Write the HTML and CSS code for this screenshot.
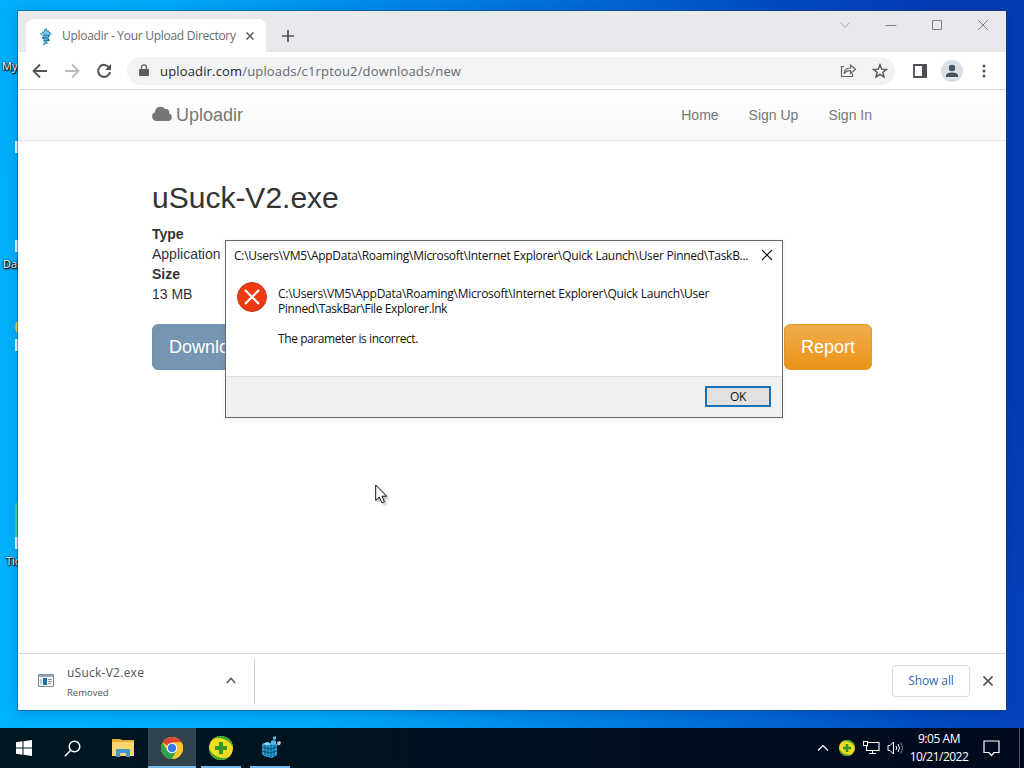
FILE: index.html
```html
<!DOCTYPE html>
<html lang="en">
<head>
  <meta charset="UTF-8">
  <title>Uploadir - Your Upload Directory</title>
  <link rel="stylesheet" href="styles.css">
</head>
<body>
  <div class="desktop">
    <!-- desktop shortcuts -->
    <span class="label label-my">My</span>
    <span class="label label-data">Data</span>
    <span class="label label-tic">Tic</span>
    <i class="shortcut s1"></i>
    <i class="shortcut s2"></i>
    <i class="shortcut yellow"></i>
    <i class="shortcut s3"></i>
    <i class="shortcut green"></i>
    <i class="shortcut s4"></i>

    <!-- browser -->
    <div class="window">
      <div class="tabs">
        <div class="tab">
          <svg class="favicon" width="14" height="18" viewBox="0 0 14 18">
            <path fill="#7cc4e4" d="M7 1l5.500 5.500H10v5L7 16l-3-1 1-2-1-2V6.500H1.500z"/>
            <path stroke="#1c6f9f" stroke-width="1.400" stroke-dasharray="1.500 1" fill="none" d="M1.500 6.500L7 1l5.500 5.500"/>
            <path stroke="#2383b5" stroke-width="1.500" fill="none" d="M3.500 7.500h7M4 10h6M4.500 12.500h6M6 15h2.500"/>
            <path stroke="#14618f" stroke-width="1.500" fill="none" d="M10 7v1.500M9.500 11v2M4 9v2M5 15.500v1.500"/>
          </svg>
          <span class="tab-title">Uploadir - Your Upload Directory</span>
          <svg class="tab-close" width="8" height="8" viewBox="0 0 8 8"><path d="M.5.5l7 7M7.500.5l-7 7" stroke="#55585c" stroke-width="1.500"/></svg>
        </div>
        <svg class="new-tab" width="12" height="12" viewBox="0 0 12 12"><path d="M6 0v12M0 6h12" stroke="#4c4f53" stroke-width="1.700"/></svg>
        <div class="controls">
          <svg width="12" height="12" viewBox="0 0 12 12"><path d="M1.500 3.500L6 8.500l4.500-5" fill="none" stroke="#a5a7aa"/></svg>
          <svg width="12" height="12" viewBox="0 0 12 12"><path d="M.5 6.500h11" stroke="#86888b"/></svg>
          <svg width="12" height="12" viewBox="0 0 12 12"><path d="M1.500 1.500h9v9h-9z" fill="none" stroke="#808285"/></svg>
          <svg width="12" height="12" viewBox="0 0 12 12"><path d="M1 1l10 10M11 1L1 11" stroke="#808285"/></svg>
        </div>
      </div>

      <div class="toolbar">
        <svg class="back" width="16" height="16" viewBox="0 0 16 16"><path d="M15 8H2M8 1.500L1.500 8 8 14.500" fill="none" stroke="#505357" stroke-width="1.800"/></svg>
        <svg class="forward" width="16" height="16" viewBox="0 0 16 16"><path d="M1 8h13M8 1.500L14.500 8 8 14.500" fill="none" stroke="#babcbe" stroke-width="1.800"/></svg>
        <svg class="reload" width="16" height="16" viewBox="0 0 16 16"><path d="M13.200 4.700A6 6 0 1 0 14 9" fill="none" stroke="#505357" stroke-width="2"/><path d="M15 1v6H9z" fill="#505357"/></svg>
        <div class="address">
          <svg width="10" height="13" viewBox="0 0 10 13"><path d="M1 5h8q1 0 1 1v5q0 1-1 1H1q-1 0-1-1V6q0-1 1-1z" fill="#5a5d61"/><path d="M2.500 5.500V3.300a2.500 2.500 0 0 1 5 0v2.200" fill="none" stroke="#5a5d61" stroke-width="1.300"/></svg>
          <span class="url"><b>uploadir.com</b>/uploads/c1rptou2/downloads/new</span>
          <svg class="share" width="17" height="15" viewBox="0 0 17 15"><path d="M4 3.500H1.500v10h11V10.500M4 10.500c.7-3.800 2.800-5.500 6.500-5.500V2l5 4.200-5 4.300v-3C7.500 7.500 5.700 8.400 4 10.500z" fill="none" stroke="#606367" stroke-width="1.200"/></svg>
          <svg class="star" width="16" height="16" viewBox="0 0 16 16"><path d="M8 1.800l1.700 4.300 4.700.3-3.600 3 1.200 4.500L8 11.400 4 13.900l1.200-4.500-3.600-3 4.700-.3z" fill="none" stroke="#505357" stroke-width="1.400"/></svg>
        </div>
        <svg class="panel" width="14" height="14" viewBox="0 0 14 14"><path d="M1 1h12v12H1z" fill="none" stroke="#4c4f53" stroke-width="1.800"/><path d="M9 0h5v14H9z" fill="#4c4f53"/></svg>
        <svg class="avatar" width="22" height="22" viewBox="0 0 22 22"><circle cx="11" cy="11" r="11" fill="#dbe0e6"/><circle cx="11" cy="8" r="3.200" fill="#485360"/><path d="M5 17v-1.500c0-4 12-4 12 0V17z" fill="#485360"/></svg>
        <svg class="dots" width="4" height="14" viewBox="0 0 4 14"><g fill="#505357"><circle cx="2" cy="2" r="1.500"/><circle cx="2" cy="7" r="1.500"/><circle cx="2" cy="12" r="1.500"/></g></svg>
      </div>

      <header class="navbar">
        <a class="brand">
          <svg width="20" height="15" viewBox="0 0 20 15"><path d="M4.500 15A4.500 4.500 0 0 1 3 6.300 5.500 5.500 0 0 1 13 3.100a3.300 3.300 0 0 1 4.100 4.300A3.900 3.900 0 0 1 16 15z" fill="#757575"/></svg>
          <span>Uploadir</span>
        </a>
        <nav>
          <a>Home</a>
          <a>Sign Up</a>
          <a>Sign In</a>
        </nav>
      </header>

      <main class="page">
        <h1>uSuck-V2.exe</h1>
        <dl>
          <dt>Type</dt>
          <dd>Application</dd>
          <dt>Size</dt>
          <dd>13 MB</dd>
        </dl>
        <div class="actions">
          <a class="btn btn-primary">Download</a>
          <a class="btn btn-warning">Report</a>
        </div>
      </main>

      <footer class="shelf">
        <div class="download">
          <svg width="16" height="13" viewBox="0 0 16 13"><path d="M.5.5h15v12H.5z" fill="#f1f5f8" stroke="#7c8a96"/><path d="M1 1h14v2H1z" fill="#9aa8b3"/><path d="M5 4h4v7H5z" fill="#1d6fa5"/><path d="M2 5h2v5H2z" fill="#bad0df"/><path d="M10 5.500h4M10 7.500h4M10 9.500h3" stroke="#8d9ba6"/></svg>
          <div class="file">
            <span class="file-name">uSuck-V2.exe</span>
            <span class="file-state">Removed</span>
          </div>
          <svg class="expand" width="10" height="7" viewBox="0 0 10 7"><path d="M.7 6L5 1.500 9.300 6" fill="none" stroke="#5a5d61" stroke-width="1.600"/></svg>
        </div>
        <button class="show-all">Show all</button>
        <svg class="shelf-close" width="10" height="10" viewBox="0 0 10 10"><path d="M.5.5l9 9M9.500.5l-9 9" stroke="#505357" stroke-width="1.700"/></svg>
      </footer>
    </div>

    <!-- error dialog -->
    <div class="dialog">
      <div class="dialog-title">
        <span>C:\Users\VM5\AppData\Roaming\Microsoft\Internet Explorer\Quick Launch\User Pinned\TaskB...</span>
        <svg width="12" height="12" viewBox="0 0 12 12"><path d="M1 1l10 10M11 1L1 11" stroke="#111" stroke-width="1.100"/></svg>
      </div>
      <div class="dialog-body">
        <svg width="30" height="30" viewBox="0 0 30 30"><circle cx="15" cy="15" r="14.500" fill="#ee3a10" stroke="#c33a20"/><path d="M8 8l14 14M22 8L8 22" stroke="#fff" stroke-width="2.200"/></svg>
        <div class="message">
          <p class="m1">C:\Users\VM5\AppData\Roaming\Microsoft\Internet Explorer\Quick Launch\User</p>
          <p class="m2">Pinned\TaskBar\File Explorer.lnk</p>
          <p class="m3">The parameter is incorrect.</p>
        </div>
      </div>
      <div class="dialog-footer"><button>OK</button></div>
    </div>

    <svg class="cursor" width="14" height="21" viewBox="0 0 14 21"><path d="M.7 1v15.500l3.600-3.400 2.600 5.700 2.500-1.100-2.500-5.500h4.700z" fill="#fff" stroke="#111"/></svg>

    <div class="taskbar">
      <div class="task"><svg width="16" height="16" viewBox="0 0 16 16"><path fill="#fff" d="M0 2.300l6.500-1v6.200H0zM7.500 1.200L16 0v7.500H7.500zM0 8.500h6.500v6.200l-6.500-1zM7.500 8.500H16V16l-8.500-1.200z"/></svg></div>
      <div class="task"><svg width="17" height="17" viewBox="0 0 17 17"><circle cx="10.500" cy="6.500" r="5.300" fill="none" stroke="#fff" stroke-width="1.400"/><path d="M6.500 10.500L.8 16.200" stroke="#fff" stroke-width="1.500"/></svg></div>
      <div class="task explorer"><svg width="22" height="18" viewBox="0 0 22 18"><path fill="#e5ad3a" d="M0 0h8l2 1h12v4H0z"/><path fill="#fbd66e" d="M0 3h22v14H0z"/><path fill="#4295d3" d="M4 18v-7q0-1 1-1h12q1 0 1 1v7h-4v-4H8v4z"/></svg></div>
      <div class="task active">
        <svg width="22" height="22" viewBox="0 0 24 24">
          <circle cx="12" cy="12" r="12" fill="#fbc92e"/>
          <path fill="#df4434" d="M12 12L1.600 6A12 12 0 0 1 22.400 6H12z"/>
          <path fill="#2ea24f" d="M1.600 6A12 12 0 0 0 12 24l5.200-9L12 12l-5.200 3z"/>
          <path fill="#fbc92e" d="M22.400 6A12 12 0 0 1 12 24l5.200-9L12 6z"/>
          <circle cx="12" cy="12" r="5.700" fill="#fff"/><circle cx="12" cy="12" r="4.600" fill="#3479e8"/>
        </svg>
      </div>
      <div class="task open"><svg width="24" height="24" viewBox="0 0 24 24"><circle cx="12" cy="12" r="12" fill="#f2dc22"/><path d="M4 3A12 12 0 0 1 24 12C21 4 12 0 4 3zM0 12A12 12 0 0 0 20 21C12 24 3 20 0 12z" fill="#40a436"/><path d="M10 6h4v4h4v4h-4v4h-4v-4H6v-4h4z" fill="#31962f"/></svg></div>
      <div class="task open"><svg width="20" height="22" viewBox="0 0 20 22"><path fill="#2a9dd2" d="M1 8l5-2 4 1 6 1v11l-5 3-8-2-2-2z"/><path d="M1 11l8 2 7-2M1 15l8 2 7-2M4 9v10M7 9v11M10 9v12M13 9v11" stroke="#0a5078" fill="none"/><path fill="#80d6f5" d="M2 8l4-2 4 2-3 1.500z"/><path fill="#53b9e3" d="M10 5l3-1 2 1v3l-3 1-2-1zM12 1l3-1v3l-2 1-1-1z"/><path fill="#b6c5d0" d="M16 6l3-1 1 1.500-1 2.500-2.500.5z"/></svg></div>

      <div class="tray">
        <svg width="12" height="8" viewBox="0 0 12 8"><path d="M1 6.500L6 1.500l5 5" fill="none" stroke="#fff" stroke-width="1.200"/></svg>
        <svg class="shield" width="16" height="16" viewBox="0 0 24 24"><circle cx="12" cy="12" r="12" fill="#f2dc22"/><path d="M4 3A12 12 0 0 1 24 12C21 4 12 0 4 3zM0 12A12 12 0 0 0 20 21C12 24 3 20 0 12z" fill="#40a436"/><path d="M10 6h4v4h4v4h-4v4h-4v-4H6v-4h4z" fill="#31962f"/></svg>
        <svg class="network" width="17" height="14" viewBox="0 0 17 14"><path d="M5 1.500h11v8H3.500V5M9.500 9.500v3M6 12.500h7M.5.500h4v4h-4z" fill="none" stroke="#fff" stroke-width="1.100"/></svg>
        <svg class="sound" width="17" height="14" viewBox="0 0 17 14"><path d="M1 4.500h2L6.500 1v12L3 9.500H1z" fill="none" stroke="#fff"/><path d="M9 5q1.500 2 0 4M11 3q3 4 0 8" fill="none" stroke="#fff"/><path d="M13.500 1.500q4 5.500 0 11" fill="none" stroke="#7d858b"/></svg>
        <div class="clock"><span>9:05 AM</span><span class="date">10/21/2022</span></div>
        <svg class="notify" width="17" height="17" viewBox="0 0 17 17"><path d="M1 1h15v11.500h-5L8.500 15.500 6 12.500H1z" fill="none" stroke="#fff" stroke-width="1.200"/></svg>
      </div>
      <div class="show-desktop"></div>
    </div>
  </div>
</body>
</html>
```
FILE: styles.css
```css
body { margin: 0; font-family: "Open Sans", "Noto Sans", sans-serif; }
.desktop { position: relative; width: 1024px; height: 768px; overflow: hidden; background: linear-gradient(78deg, #00b2fc 0, #00abf8 27%, #0090ec 42%, #0062d2 67%, #024bc4 79%, #043cb4 92%); }
svg { display: block; flex: none; }
span { white-space: nowrap; }

/* desktop items peeking out behind the window */
.label { position: absolute; font-size: 11px; line-height: 14px; color: #fff; text-shadow: 0 1px 2px #000, 1px 1px 1px #000, 0 0 2px #000; }
.label-my { left: 2px; top: 59px; }
.label-data { left: 3px; top: 257px; }
.label-tic { left: 6px; top: 554px; }
.shortcut { position: absolute; left: 15px; width: 10px; height: 12px; background: #e8f4fc; }
.s1 { top: 141px; }
.s2 { top: 240px; }
.s3 { top: 339px; }
.s4 { top: 537px; }
.yellow { top: 317px; width: 20px; height: 20px; border-radius: 50%; background: #d9d34a; }
.green { top: 503px; height: 34px; background: #3ed58a; }

.window { position: absolute; left: 18px; top: 11px; width: 988px; height: 699px; display: flex; flex-direction: column; background: #fff; box-shadow: 0 0 0 1px rgba(20,60,100,0.45), 0 2px 12px rgba(0,20,80,0.2); }

.tabs { height: 41px; flex: none; display: flex; background: #e8e9ec; }
.tab { display: flex; align-items: center; width: 240px; height: 33px; margin: 8px 0 0 8px; padding-left: 13px; box-sizing: border-box; background: #fff; border-radius: 8px 8px 0 0; }
.favicon { margin-top: 2px; }
.tab-title { width: 178px; margin-left: 9px; font-size: 12px; letter-spacing: -0.28px; color: #66696d; }
.tab-close { margin-left: 6px; margin-top: 1px; }
.new-tab { margin: 19px 0 0 16px; }
.controls { display: flex; gap: 34px; margin: 8px 17px 0 auto; }

.toolbar { height: 37px; flex: none; display: flex; align-items: center; padding-left: 14px; border-bottom: 1px solid #d6d7d9; }
.forward { margin-left: 16px; }
.reload { margin-left: 16px; }
.address { display: flex; align-items: center; width: 768px; height: 28px; margin-left: 15px; padding: 0 7px 0 12px; box-sizing: border-box; border-radius: 14px; background: #f1f3f4; }
.url { margin-left: 11px; font-size: 13px; letter-spacing: 0.16px; color: #66696d; }
.url b { font-weight: normal; color: #25272a; }
.share { margin-left: auto; }
.star { margin-left: 15px; }
.panel { margin-left: 18px; }
.avatar { margin-left: 14px; }
.dots { margin-left: 19px; }

.navbar { height: 50px; flex: none; display: flex; align-items: center; justify-content: space-between; padding: 0 134px; border-bottom: 1px solid #e5e5e5; background: linear-gradient(#fff, #f8f8f8); font-family: "Liberation Sans", Arial, sans-serif; color: #777; }
.brand { display: flex; align-items: center; gap: 4px; font-size: 18px; }
.brand svg { margin-bottom: 3px; }
nav { display: flex; gap: 30px; font-size: 14px; }

.page { flex: 1; padding: 38px 134px 0; font-family: "Liberation Sans", Arial, sans-serif; color: #333; }
h1 { margin: 0; font-size: 30px; line-height: 38px; font-weight: normal; }
dl { margin: 7px 0 20px; font-size: 14px; line-height: 20px; }
dt { font-weight: bold; }
dd { margin: 0; }
.actions { display: flex; justify-content: space-between; }
.btn { height: 46px; padding: 0 16px; box-sizing: border-box; border: 1px solid #7190ad; border-radius: 6px; font-size: 18px; line-height: 44px; color: #fff; }
.btn-primary { background: #7595b3; }
.btn-warning { border-color: #e09a30; background: linear-gradient(#f0ad4e, #eb9316); }

.shelf { height: 54px; flex: none; display: flex; align-items: center; padding-bottom: 2px; border-top: 1px solid #d5d6d8; }
.download { display: flex; align-items: center; width: 237px; height: 45px; padding-left: 20px; box-sizing: border-box; border-right: 1px solid #cfd0d2; }
.download > svg { margin-bottom: 1px; }
.file { display: flex; flex-direction: column; margin: 2px 0 0 13px; color: #505357; }
.file-name { font-size: 12px; line-height: 20px; letter-spacing: 0.25px; }
.file-state { font-size: 9.5px; line-height: 19px; }
.expand { margin-left: auto; margin-right: 18px; }
.show-all { width: 78px; height: 32px; margin-left: auto; padding: 0 0 2px; border: 1px solid #d9dbde; border-radius: 4px; background: #fff; font-family: inherit; font-size: 12px; letter-spacing: -0.1px; color: #3468b5; }
.shelf-close { margin: 0 13px; }

.dialog { position: absolute; left: 225px; top: 240px; width: 558px; height: 178px; box-sizing: border-box; display: flex; flex-direction: column; border: 1px solid #66676a; background: #fff; color: #111; box-shadow: 0 1px 5px rgba(0,0,0,0.08); }
.dialog-title { display: flex; align-items: center; justify-content: space-between; height: 29px; padding: 0 9px 0 8px; font-size: 12px; letter-spacing: -0.28px; }
.dialog-title svg { margin-bottom: 1px; }
.dialog-body { flex: 1; display: flex; padding: 12px 11px 0; }
.message { margin: 4px 0 0 11px; font-size: 12px; line-height: 15px; white-space: nowrap; }
.message p { margin: 0; }
.message .m1 { letter-spacing: -0.26px; }
.message .m2 { letter-spacing: -0.39px; }
.message .m3 { margin-top: 15px; letter-spacing: -0.42px; }
.dialog-footer { height: 41px; flex: none; display: flex; align-items: center; justify-content: flex-end; padding: 0 11px 1px 0; box-sizing: border-box; border-top: 1px solid #dfdfdf; background: #f0f0f0; }
.dialog-footer button { width: 66px; height: 21px; padding: 0; border: 2px solid #1873b9; background: #e1e1e1; font-family: inherit; font-size: 12px; line-height: 17px; letter-spacing: -0.3px; color: #111; }

.cursor { position: absolute; left: 375px; top: 484px; filter: drop-shadow(2px 2px 1px rgba(0,0,0,0.25)); }

.taskbar { position: absolute; left: 0; right: 0; bottom: 0; height: 40px; display: flex; background: linear-gradient(90deg, #001722, #00121f 50%, #020a1e); color: #fff; }
.task { display: flex; align-items: center; justify-content: center; width: 48px; height: 40px; box-sizing: border-box; }
.explorer { width: 52px; padding-left: 2px; }
.active { background: #2f434d; border-bottom: 2px solid #76b9ed; }
.active svg, .open svg { margin-top: 2px; }
.open { width: 40px; margin: 0 5px; border-bottom: 2px solid #76b9ed; }
.open + .open { margin-left: 4px; padding-left: 2px; }
.open + .open svg { margin-top: 0; }
.tray { display: flex; align-items: center; margin-left: auto; margin-right: 19px; }
.shield { margin-left: 10px; }
.network { margin-left: 8px; }
.sound { margin-left: 7px; }
.clock { display: flex; flex-direction: column; align-items: center; width: 62px; margin-left: 4px; font-size: 12px; line-height: 18px; letter-spacing: -0.45px; }
.date { letter-spacing: -0.5px; }
.notify { margin-left: 13px; }
.show-desktop { width: 4px; border-left: 1px solid #4a5364; }
```
